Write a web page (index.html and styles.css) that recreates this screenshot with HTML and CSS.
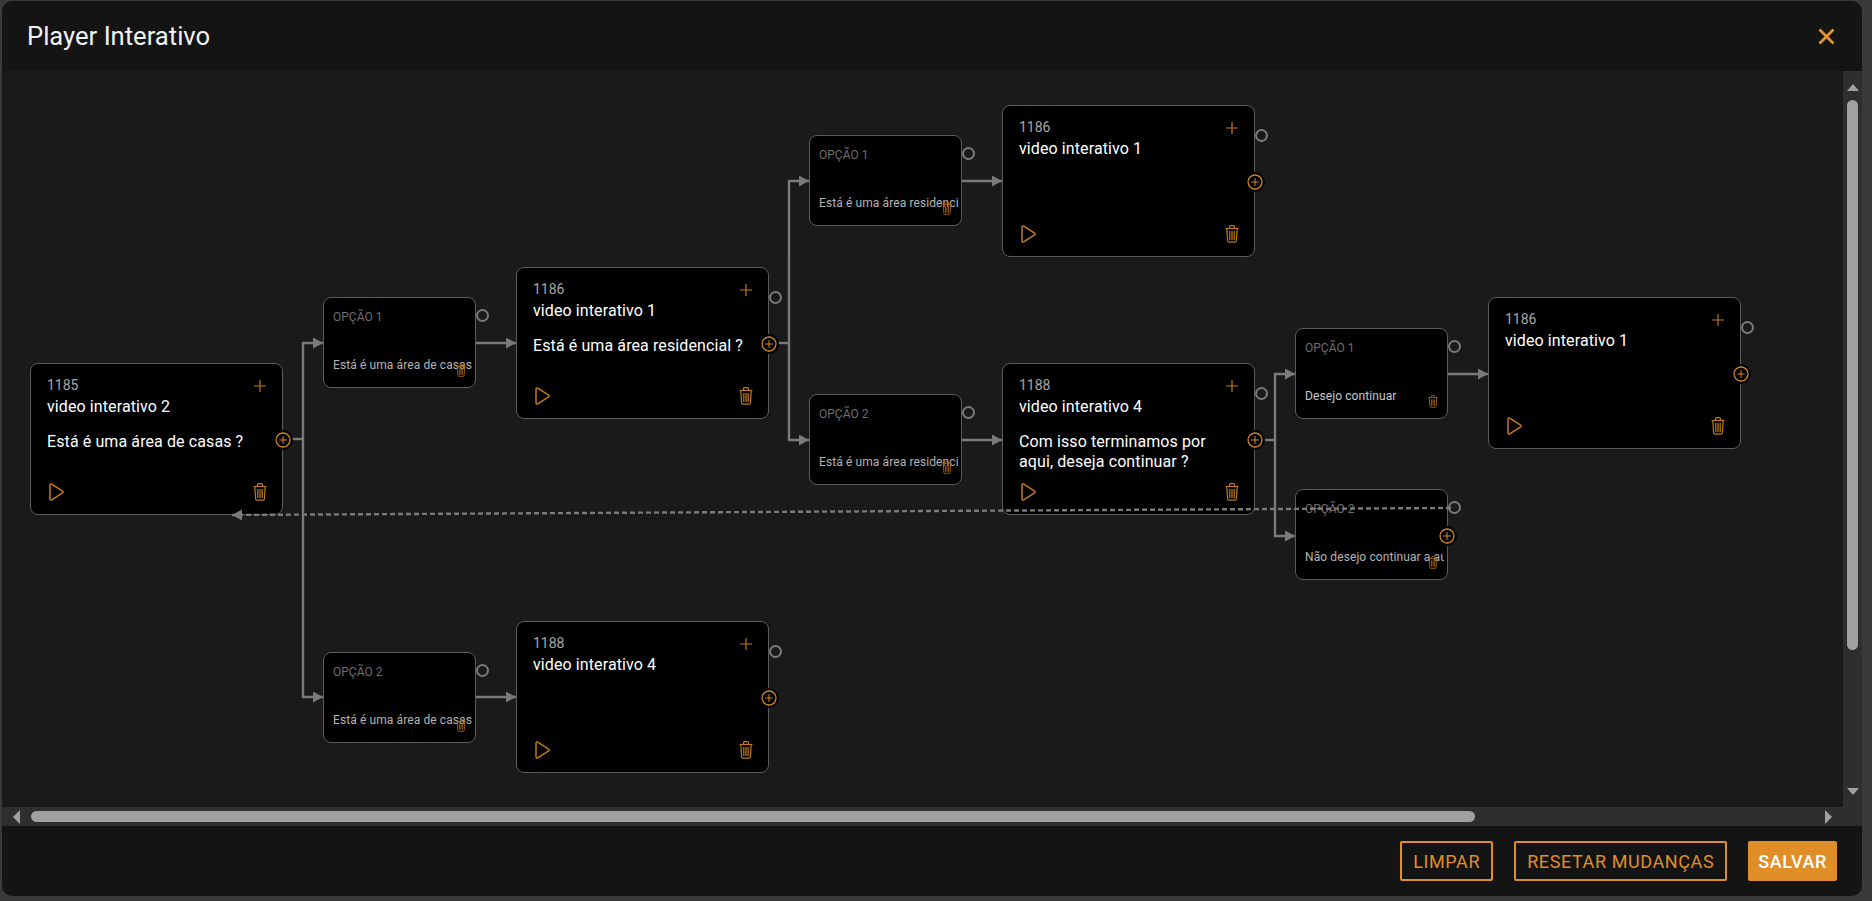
FILE: index.html
```html
<!DOCTYPE html>
<html lang="pt-BR">
<head>
    <meta charset="utf-8">
    <title>Player Interativo</title>
    <link rel="stylesheet" href="styles.css">
</head>
<body>
<svg class="defs" width="0" height="0">
    <symbol id="i-plus" viewBox="0 0 12 12"><path d="M6 0V12M0 6H12" fill="none" stroke="currentColor" stroke-width="1.2"/></symbol>
    <symbol id="i-play" viewBox="0 0 15 18"><path d="M1 2.2C1 1.2 1.9.7 2.7 1.2L13.6 8.1C14.3 8.5 14.3 9.5 13.6 9.9L2.7 16.8C1.9 17.3 1 16.8 1 15.8Z" fill="none" stroke="currentColor" stroke-width="1.5" stroke-linejoin="round"/></symbol>
    <symbol id="i-trash" viewBox="0 0 14 18"><path d="M.5 3.5H13.5M4.5 3.5V1.8C4.5 1 5 .7 5.6 .7H8.4C9 .7 9.5 1 9.5 1.8V3.5M1.8 3.5L2.6 16C2.7 16.8 3.1 17.2 3.9 17.2H10.1C10.9 17.2 11.3 16.8 11.4 16L12.2 3.5M4.8 6V15M7 6V15M9.2 6V15" fill="none" stroke="currentColor" stroke-width="1.2"/></symbol>
    <symbol id="i-add" viewBox="0 0 16 16"><circle cx="8" cy="8" r="7" fill="#000" stroke="currentColor" stroke-width="1.3"/><path d="M8 4.2V11.8M4.2 8H11.8" fill="none" stroke="currentColor" stroke-width="1.1"/></symbol>
</svg>

<div class="modal">
    <header class="modal-head">
        <h1 class="modal-title">Player Interativo</h1>
        <button class="close-btn" type="button" aria-label="Fechar">
            <svg width="17" height="17" viewBox="0 0 17 17"><path d="M1.5 1.5L15.5 15.5M15.5 1.5L1.5 15.5" fill="none" stroke="currentColor" stroke-width="2.8"/></svg>
        </button>
    </header>

    <div class="modal-body">
        <div class="canvas">
            <svg class="links" width="1841" height="736">
                <defs>
                    <marker id="arrow" markerUnits="userSpaceOnUse" markerWidth="10" markerHeight="11" refX="10" refY="5.5" orient="auto">
                        <path d="M0 0L10 5.5L0 11Z" fill="#7a7a7a"/>
                    </marker>
                </defs>
                <path d="M290 368H301"/>
                <path d="M301 368V272H321" marker-end="url(#arrow)"/>
                <path d="M301 368V626H321" marker-end="url(#arrow)"/>
                <path d="M474 272H514" marker-end="url(#arrow)"/>
                <path d="M474 626H514" marker-end="url(#arrow)"/>
                <path d="M776 272H787"/>
                <path d="M787 272V110H807" marker-end="url(#arrow)"/>
                <path d="M787 272V369H807" marker-end="url(#arrow)"/>
                <path d="M960 110H1000" marker-end="url(#arrow)"/>
                <path d="M960 369H1000" marker-end="url(#arrow)"/>
                <path d="M1262 369H1273"/>
                <path d="M1273 369V303H1293" marker-end="url(#arrow)"/>
                <path d="M1273 369V465H1293" marker-end="url(#arrow)"/>
                <path d="M1446 303H1486" marker-end="url(#arrow)"/>
            </svg>

            <div class="node video n-v1">
                <div class="video-top"><span class="video-id">1185</span><svg class="ico-plus"><use href="#i-plus"/></svg></div>
                <div class="video-name">video interativo 2</div>
                <div class="video-ask">Está é uma área de casas ?</div>
                <div class="video-actions"><svg class="ico-play"><use href="#i-play"/></svg><svg class="ico-trash"><use href="#i-trash"/></svg></div>
                <svg class="port-add"><use href="#i-add"/></svg>
            </div>

            <div class="node option n-o1">
                <div class="option-label">OPÇÃO 1</div>
                <div class="option-text">Está é uma área de casas</div>
                <svg class="ico-trash-sm"><use href="#i-trash"/></svg>
                <span class="port"></span>
            </div>

            <div class="node option n-o2">
                <div class="option-label">OPÇÃO 2</div>
                <div class="option-text">Está é uma área de casas</div>
                <svg class="ico-trash-sm"><use href="#i-trash"/></svg>
                <span class="port"></span>
            </div>

            <div class="node video n-v2">
                <div class="video-top"><span class="video-id">1186</span><svg class="ico-plus"><use href="#i-plus"/></svg></div>
                <div class="video-name">video interativo 1</div>
                <div class="video-ask">Está é uma área residencial ?</div>
                <div class="video-actions"><svg class="ico-play"><use href="#i-play"/></svg><svg class="ico-trash"><use href="#i-trash"/></svg></div>
                <span class="port"></span><svg class="port-add"><use href="#i-add"/></svg>
            </div>

            <div class="node video n-v3">
                <div class="video-top"><span class="video-id">1188</span><svg class="ico-plus"><use href="#i-plus"/></svg></div>
                <div class="video-name">video interativo 4</div>
                <div class="video-actions"><svg class="ico-play"><use href="#i-play"/></svg><svg class="ico-trash"><use href="#i-trash"/></svg></div>
                <span class="port"></span><svg class="port-add"><use href="#i-add"/></svg>
            </div>

            <div class="node option n-o3">
                <div class="option-label">OPÇÃO 1</div>
                <div class="option-text">Está é uma área residencial</div>
                <svg class="ico-trash-sm"><use href="#i-trash"/></svg>
                <span class="port"></span>
            </div>

            <div class="node option n-o4">
                <div class="option-label">OPÇÃO 2</div>
                <div class="option-text">Está é uma área residencial</div>
                <svg class="ico-trash-sm"><use href="#i-trash"/></svg>
                <span class="port"></span>
            </div>

            <div class="node video n-v4">
                <div class="video-top"><span class="video-id">1186</span><svg class="ico-plus"><use href="#i-plus"/></svg></div>
                <div class="video-name">video interativo 1</div>
                <div class="video-actions"><svg class="ico-play"><use href="#i-play"/></svg><svg class="ico-trash"><use href="#i-trash"/></svg></div>
                <span class="port"></span><svg class="port-add"><use href="#i-add"/></svg>
            </div>

            <div class="node video n-v5">
                <div class="video-top"><span class="video-id">1188</span><svg class="ico-plus"><use href="#i-plus"/></svg></div>
                <div class="video-name">video interativo 4</div>
                <div class="video-ask">Com isso terminamos por aqui, deseja continuar ?</div>
                <div class="video-actions"><svg class="ico-play"><use href="#i-play"/></svg><svg class="ico-trash"><use href="#i-trash"/></svg></div>
                <span class="port"></span><svg class="port-add"><use href="#i-add"/></svg>
            </div>

            <div class="node option n-o5">
                <div class="option-label">OPÇÃO 1</div>
                <div class="option-text option-text-on">Desejo continuar</div>
                <svg class="ico-trash-sm"><use href="#i-trash"/></svg>
                <span class="port"></span>
            </div>

            <div class="node option n-o6">
                <div class="option-label">OPÇÃO 2</div>
                <div class="option-text">Não desejo continuar a aula</div>
                <svg class="ico-trash-sm"><use href="#i-trash"/></svg>
                <span class="port"></span><svg class="port-add"><use href="#i-add"/></svg>
            </div>

            <div class="node video n-v6">
                <div class="video-top"><span class="video-id">1186</span><svg class="ico-plus"><use href="#i-plus"/></svg></div>
                <div class="video-name">video interativo 1</div>
                <div class="video-actions"><svg class="ico-play"><use href="#i-play"/></svg><svg class="ico-trash"><use href="#i-trash"/></svg></div>
                <span class="port"></span><svg class="port-add"><use href="#i-add"/></svg>
            </div>

            <svg class="links links-top" width="1841" height="736">
                <path class="dashed" d="M1449 437L230 444" marker-end="url(#arrow)"/>
            </svg>
        </div>

        <div class="vbar">
            <span class="arrow arrow-up"></span>
            <span class="vbar-thumb"></span>
            <span class="arrow arrow-down"></span>
        </div>
        <div class="hbar">
            <span class="arrow arrow-left"></span>
            <span class="hbar-thumb"></span>
            <span class="arrow arrow-right"></span>
        </div>
        <div class="bar-corner"></div>
    </div>

    <footer class="modal-foot">
        <button class="btn btn-line" type="button">LIMPAR</button>
        <button class="btn btn-line" type="button">RESETAR MUDANÇAS</button>
        <button class="btn btn-fill" type="button">SALVAR</button>
    </footer>
</div>
</body>
</html>
```

FILE: styles.css
```css
* {
    box-sizing: border-box;
}

html, body {
    height: 100%;
    margin: 0;
}

body {
    background: #3a3a3a;
    padding: 1px 10px 5px 2px;
    overflow: hidden;
    font-family: Roboto, "Liberation Sans", sans-serif;
}

.defs {
    position: absolute;
}

.modal {
    height: 100%;
    display: flex;
    flex-direction: column;
    background: #141414;
    border-radius: 10px;
    overflow: hidden;
}

.modal-head {
    height: 70px;
    flex: none;
    display: flex;
    align-items: center;
    justify-content: space-between;
    padding: 0 27px 0 25px;
}

.modal-title {
    margin: 0;
    font-size: 25.6px;
    font-weight: 400;
    color: #f2f2f2;
}

.close-btn {
    display: flex;
    padding: 0;
    border: none;
    background: none;
    color: #e8932a;
}

.modal-body {
    flex: 1;
    min-height: 0;
    display: grid;
    grid-template-columns: 1fr 19px;
    grid-template-rows: 1fr 19px;
}

.canvas {
    position: relative;
    background: #1a1a1a;
    overflow: hidden;
}

.links {
    position: absolute;
    left: 0;
    top: 0;
}

.links-top {
    pointer-events: none;
}

.links path {
    fill: none;
    stroke: #7a7a7a;
    stroke-width: 2.4;
}

.links marker path {
    fill: #7a7a7a;
    stroke: none;
}

.links .dashed {
    stroke-dasharray: 5 3;
}

/* nodes */
.node {
    position: absolute;
    display: flex;
    flex-direction: column;
    background: #000;
    border: 1px solid #5c5c5c;
    border-radius: 8px;
}

.video {
    width: 253px;
    height: 152px;
    padding: 12px 15px 13px 16px;
}

.option {
    width: 153px;
    height: 91px;
    padding: 12px 3px 0 8px;
}

.n-v1 { left: 28px; top: 292px; }
.n-v2 { left: 514px; top: 196px; }
.n-v3 { left: 514px; top: 550px; }
.n-v4 { left: 1000px; top: 34px; }
.n-v5 { left: 1000px; top: 292px; }
.n-v6 { left: 1486px; top: 226px; }
.n-o1 { left: 321px; top: 226px; }
.n-o2 { left: 321px; top: 581px; }
.n-o3 { left: 807px; top: 64px; }
.n-o4 { left: 807px; top: 323px; }
.n-o5 { left: 1293px; top: 257px; }
.n-o6 { left: 1293px; top: 418px; }

.video-top {
    display: flex;
    align-items: center;
    justify-content: space-between;
    height: 18px;
}

.video-id {
    font-size: 14px;
    color: #a8a8a8;
}

.ico-plus {
    width: 12px;
    height: 12px;
    margin: 2px 1px 0 0;
    color: #c27b18;
}

.video-name {
    margin-top: 2px;
    font-size: 16px;
    line-height: 22px;
    letter-spacing: 0.1px;
    color: #fff;
}

.video-ask {
    margin-top: 14px;
    font-size: 16px;
    line-height: 20px;
    letter-spacing: 0.1px;
    color: #fff;
}

.video-actions {
    margin-top: auto;
    display: flex;
    align-items: center;
    justify-content: space-between;
}

.ico-play {
    width: 15px;
    height: 18px;
    margin-left: 2px;
    color: #c27b18;
}

.ico-trash {
    width: 14px;
    height: 18px;
    color: #c27b18;
}

.option-label {
    font-size: 12px;
    line-height: 14px;
    padding-left: 1px;
    color: #6e6e6e;
}

.option-text {
    margin-top: 34px;
    padding-left: 1px;
    font-size: 12px;
    line-height: 14px;
    letter-spacing: 0.1px;
    color: #b4b4b4;
    white-space: nowrap;
    overflow: hidden;
}

.option-text-on {
    color: #c8c8c8;
}

.ico-trash-sm {
    position: absolute;
    right: 9px;
    top: 66px;
    width: 10px;
    height: 13px;
    color: #a8680f;
}

.port {
    position: absolute;
    left: calc(100% + 1px);
    top: 11px;
    width: 13px;
    height: 13px;
    border: 2.5px solid #7a7a7a;
    border-radius: 50%;
}

.video .port {
    top: 23px;
}

.port-add {
    position: absolute;
    left: calc(100% - 7px);
    top: 68px;
    width: 16px;
    height: 16px;
    border-radius: 50%;
    box-shadow: 0 0 0 2px #000;
    color: #d08420;
}

.option .port-add {
    left: calc(100% - 8px);
    top: 38px;
}

/* scrollbars */
.vbar, .hbar {
    position: relative;
    background: #2e2e2e;
    display: flex;
}

.vbar {
    flex-direction: column;
    align-items: center;
    padding: 13px 0 12px;
}

.hbar {
    align-items: center;
    padding: 0 11px 0 11px;
}

.bar-corner {
    background: #2e2e2e;
}

.vbar-thumb {
    width: 11px;
    height: 550px;
    margin-top: 9px;
    background: #a0a0a0;
    border-radius: 6px;
}

.hbar-thumb {
    width: 1444px;
    height: 11px;
    margin-left: 11px;
    background: #a0a0a0;
    border-radius: 6px;
}

.arrow {
    width: 0;
    height: 0;
    flex: none;
    border-style: solid;
    border-color: transparent;
}

.arrow-up {
    border-width: 0 6.5px 7px;
    border-bottom-color: #a0a0a0;
}

.arrow-down {
    margin-top: auto;
    border-width: 7px 6.5px 0;
    border-top-color: #a0a0a0;
}

.arrow-left {
    border-width: 7px 7px 7px 0;
    border-right-color: #a0a0a0;
}

.arrow-right {
    margin-left: auto;
    border-width: 7px 0 7px 7px;
    border-left-color: #a0a0a0;
}

/* footer */
.modal-foot {
    height: 70px;
    flex: none;
    display: flex;
    align-items: center;
    justify-content: flex-end;
    gap: 21px;
    padding: 0 25px 0 0;
}

.btn {
    height: 40px;
    padding: 0 11px;
    border: 2px solid #e08e27;
    border-radius: 2px;
    font-family: inherit;
    font-size: 18px;
    letter-spacing: 0.6px;
}

.btn-line {
    background: none;
    color: #e08e27;
}

.btn-fill {
    padding: 0 8px;
    background: #e08e27;
    color: #fff;
    font-weight: 500;
}
```
